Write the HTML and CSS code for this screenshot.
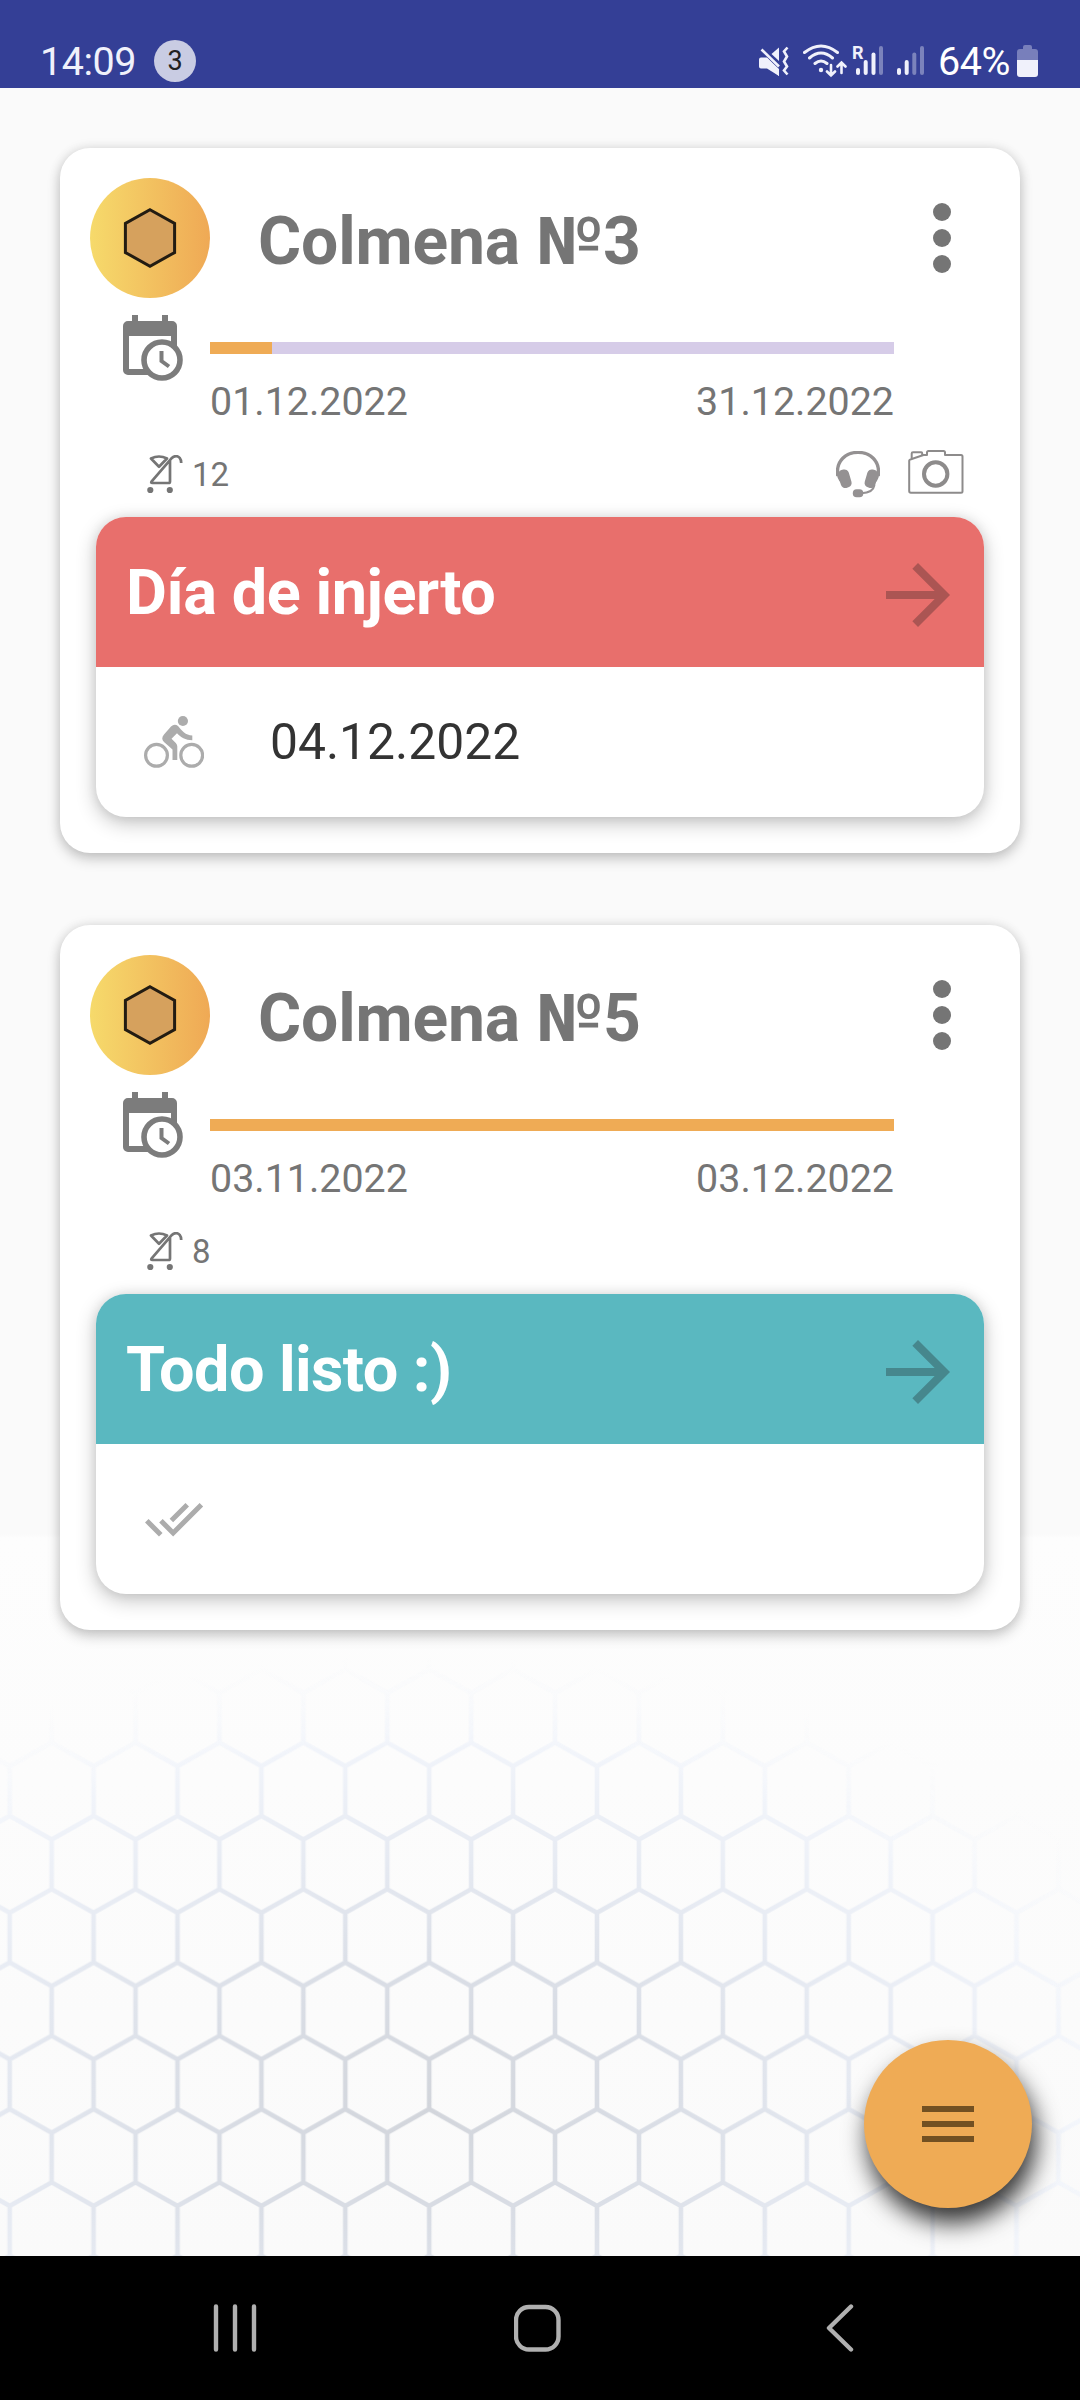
FILE: index.html
```html
<!DOCTYPE html>
<html lang="es">
<head>
<meta charset="utf-8">
<title>Colmenas</title>
<link rel="stylesheet" href="styles.css">
</head>
<body>
<svg class="defs" width="0" height="0" aria-hidden="true">
  <defs>
    <symbol id="calendar" viewBox="0 0 60 66">
      <path fill="#7c7c7c" fill-rule="evenodd" d="M9 0h6v6h24V0h6v6h4a5 5 0 0 1 5 5v44a5 5 0 0 1-5 5H5a5 5 0 0 1-5-5V11a5 5 0 0 1 5-5h4zM6 21v33h42V21z"/>
      <circle cx="39" cy="45" r="18" fill="#fff" stroke="#7c7c7c" stroke-width="5.6"/>
      <path d="M38.500 36v10l7.500 5.500" fill="none" stroke="#7c7c7c" stroke-width="4"/>
    </symbol>
    <symbol id="stroller" viewBox="0 0 36 39">
      <g fill="none" stroke="#757575" stroke-width="2.700" stroke-linejoin="round">
        <path d="M23 6v20.500q0 1.500-1.500 1.500H5.500q-2 0-.8-1.600L24.500 3.300q4.500-4 8.200-.4 1.400 1.700 1.500 5.100"/>
        <path d="M4 3.500q8-4 16 0L12 11.800z"/>
      </g>
      <circle cx="3.300" cy="35" r="3.100" fill="#757575"/><circle cx="22.800" cy="35" r="3.100" fill="#757575"/>
    </symbol>
    <symbol id="arrow" viewBox="0 0 24 24">
      <path d="M12 4l-1.410 1.410L16.170 11H4v2h12.170l-5.580 5.590L12 20l8-8z"/>
    </symbol>
    <symbol id="more" viewBox="0 0 18 70">
      <circle cx="9" cy="9" r="9"/><circle cx="9" cy="35" r="9"/><circle cx="9" cy="61" r="9"/>
    </symbol>
    <symbol id="hive" viewBox="0 0 120 120">
      <path d="M60 31.800 84.600 45.500v29L60 88.200 35.400 74.500v-29z" fill="#d6a15d" stroke="#231c12" stroke-width="3"/>
    </symbol>
  </defs>
</svg>

<header class="status">
  <span class="clock">14:09</span>
  <span class="badge">3</span>
  <div class="status-icons">
    <svg class="mute" viewBox="0 0 30 32" width="30" height="32" fill="#f0f1fb">
      <path d="M2 12.500h6L20 25v6L8 23.500H2q-2 0-2-2v-7q0-2 2-2z"/>
      <path d="M8 13 20 24v7L7 20z"/><path d="M12.500 9 20 2.500V16z"/>
      <path d="M2.500 4.500 20 21.500" stroke="#f0f1fb" stroke-width="2.600"/>
      <path d="M28.500 2.500l-3.500 4 3 5-3 5 3 5-3 4 3.500 4" fill="none" stroke="#f0f1fb" stroke-width="2.600"/>
    </svg>
    <svg class="wifi" viewBox="0 0 44 34" width="44" height="34" fill="none" stroke="#f0f1fb" stroke-width="3" stroke-linecap="round">
      <path d="M1.500 8.500Q18-4.500 34.500 8.500M6.500 14Q18 4 29.500 14M12 19.500q6-5 12 0"/>
      <circle cx="18" cy="26" r="2.200" fill="#f0f1fb" stroke="none"/>
      <path d="M28 21v10.500m-4-4 4 4 4-4M38.500 29V18.500m-4 4 4-4 4 4" stroke-width="2.600"/>
    </svg>
    <div class="signal-one">
      <span class="roaming">R</span>
      <svg viewBox="0 0 31 32" width="31" height="32" fill="#f0f1fb">
        <rect x="4" y="23" width="4" height="7" rx="2"/><rect x="11.700" y="15" width="4" height="15" rx="2"/><rect x="19.500" y="7.500" width="4" height="22.500" rx="2"/><rect x="27" y="1" width="4" height="29" rx="2" opacity=".38"/>
      </svg>
    </div>
    <svg class="signal-two" viewBox="0 0 27 32" width="27" height="32" fill="#f0f1fb">
      <rect x="0" y="23" width="4" height="7" rx="2"/><rect x="7.700" y="15" width="4" height="15" rx="2"/><rect x="15.300" y="7.500" width="4" height="22.500" rx="2" opacity=".38"/><rect x="23" y="1" width="4" height="29" rx="2" opacity=".38"/>
    </svg>
    <span class="percent">64%</span>
    <svg class="battery" viewBox="0 0 21 32" width="21" height="32" fill="#f0f1fb">
      <path d="M6 2q0-2 2-2h5q2 0 2 2v2h3q3 0 3 3v8H0V7q0-3 3-3h3z" opacity=".36"/>
      <path d="M0 15h21v14q0 3-3 3H3q-3 0-3-3z"/>
    </svg>
  </div>
</header>

<main class="content">
  <svg class="honeycomb" viewBox="0 0 1080 720" aria-hidden="true">
    <defs>
      <pattern id="cells" width="83.900" height="146.600" patternUnits="userSpaceOnUse" patternTransform="translate(9.700 230.200)">
        <path d="M0-.5V49.700L41.950 73.300 83.900 49.700V-.5M0 0 41.950-23.600 83.900 0M41.950 73.300V123M0 146.600 41.950 123 83.900 146.600" fill="none" stroke="#fff" stroke-width="4.600"/>
      </pattern>
      <mask id="grid" maskUnits="userSpaceOnUse" x="0" y="0" width="1080" height="720"><rect width="1080" height="720" fill="url(#cells)"/></mask>
      <radialGradient id="fade" gradientUnits="userSpaceOnUse" cx="0" cy="0" r="1" gradientTransform="translate(420 570) scale(800 450)">
        <stop offset="0" stop-color="#d2d5db"/><stop offset=".3" stop-color="#dadee6"/><stop offset=".55" stop-color="#e6eaf2"/><stop offset=".8" stop-color="#f1f4fa"/><stop offset="1" stop-color="#f8fafd" stop-opacity="0"/>
      </radialGradient>
    </defs>
    <rect width="1080" height="720" fill="url(#fade)" mask="url(#grid)"/>
  </svg>

  <article class="card">
    <div class="card-head">
      <span class="avatar"><svg width="120" height="120"><use href="#hive"/></svg></span>
      <h2>Colmena №3</h2>
      <svg class="more" width="18" height="70"><use href="#more"/></svg>
    </div>
    <div class="schedule">
      <svg class="calendar" width="60" height="66"><use href="#calendar"/></svg>
      <div class="timeline">
        <div class="track"><div class="fill" style="width:9.1%"></div></div>
        <div class="dates"><span>01.12.2022</span><span>31.12.2022</span></div>
      </div>
    </div>
    <div class="meta">
      <svg width="36" height="39"><use href="#stroller"/></svg>
      <span class="count">12</span>
      <svg class="headset" viewBox="0 0 44 47" width="44" height="47" fill="#949192">
        <path d="M1.800 25C-3 -6.500 47-6.500 42.200 25" fill="none" stroke="#949192" stroke-width="3.300"/>
        <rect x="-5.500" y="-9" width="11" height="18.500" rx="4.500" transform="translate(8.800 27.500) rotate(-16)"/>
        <rect x="-5.500" y="-9" width="11" height="18.500" rx="4.500" transform="translate(35.400 27.500) rotate(16)"/>
        <path d="M1.300 20q.5 8 5 12M42.700 20q-.5 8-4 11" fill="none" stroke="#949192" stroke-width="2"/>
        <path d="M38.500 34q-1.500 8-13 8.200" fill="none" stroke="#949192" stroke-width="2"/>
        <rect x="16.800" y="38.300" width="10.500" height="8" rx="3.800"/>
      </svg>
      <svg class="camera" viewBox="0 0 56 44" width="56" height="44" fill="none" stroke="#8d8b8b" stroke-width="2" stroke-linejoin="round">
        <path d="M1.200 10.500V41q0 1.700 1.700 1.700H53q1.500 0 1.500-1.500V6.500Q54.500 5 53 5H37V2.500Q37 1 35.500 1h-15Q19 1 19 2.500V5h-3.500L3 9.200q-1.800.5-1.800 1.300z"/>
        <path d="M3.700 8.500V3.500Q3.700 2.300 5 2.300h8.200q1 0 1 1.200v1.700"/>
        <circle cx="27.700" cy="24" r="11.700" stroke-width="4"/>
      </svg>
    </div>
    <section class="task">
      <div class="task-head task-red"><h3>Día de injerto</h3><svg class="arrow" width="96" height="96"><use href="#arrow"/></svg></div>
      <div class="task-body">
        <svg class="task-icon" viewBox="0 -4 60 60" width="60" height="60">
          <g fill="none" stroke="#acacac" stroke-width="3.200"><circle cx="12.500" cy="39.300" r="10.900"/><circle cx="47.700" cy="39.300" r="10.900"/></g>
          <circle cx="38.900" cy="5" r="5.100" fill="#acacac"/>
          <path fill="#acacac" d="M27 10.500q3.500-3 7-.5c4 5 7.500 9.200 14.300 9.500v4.700c-7 0-11.500-3-15.300-7l-5.500 5.500 4.300 4.200q1.500 1.500 1.500 3.500V44H28.500V33.500L20 26q-3.500-3.500 0-7.500z"/>
        </svg>
        <span>04.12.2022</span>
      </div>
    </section>
  </article>

  <article class="card">
    <div class="card-head">
      <span class="avatar"><svg width="120" height="120"><use href="#hive"/></svg></span>
      <h2>Colmena №5</h2>
      <svg class="more" width="18" height="70"><use href="#more"/></svg>
    </div>
    <div class="schedule">
      <svg class="calendar" width="60" height="66"><use href="#calendar"/></svg>
      <div class="timeline">
        <div class="track"><div class="fill" style="width:100%"></div></div>
        <div class="dates"><span>03.11.2022</span><span>03.12.2022</span></div>
      </div>
    </div>
    <div class="meta">
      <svg width="36" height="39"><use href="#stroller"/></svg>
      <span class="count">8</span>
    </div>
    <section class="task">
      <div class="task-head task-teal"><h3>Todo listo :)</h3><svg class="arrow" width="96" height="96"><use href="#arrow"/></svg></div>
      <div class="task-body">
        <svg class="task-icon" viewBox="0 0 24 24" width="60" height="60" fill="#acacac">
          <path d="M18 7l-1.410-1.410-6.340 6.340 1.410 1.410L18 7zm4.240-1.410L11.660 16.170 7.480 12l-1.410 1.410L11.660 19l12-12-1.420-1.410zM.41 13.410L6 19l1.410-1.410L1.830 12 .41 13.410z"/>
        </svg>
      </div>
    </section>
  </article>
</main>

<button class="fab" aria-label="Menú">
  <span></span><span></span><span></span>
</button>

<nav class="navbar">
  <svg viewBox="0 0 48 48" width="48" height="48"><path d="M5 2.500v43M24 2.500v43M43 2.500v43"/></svg>
  <svg viewBox="0 0 48 48" width="48" height="48"><rect x="2" y="3" width="42.500" height="42.500" rx="13"/></svg>
  <svg viewBox="0 0 48 48" width="48" height="48"><path d="M35 2.500 13 24l22 21.500"/></svg>
</nav>
</body>
</html>
```
FILE: styles.css
```css
* { box-sizing: border-box; }

body {
  margin: 0;
  width: 1080px;
  height: 2400px;
  display: flex;
  flex-direction: column;
  overflow: hidden;
  background: #fafafa;
  font-family: Roboto, "Liberation Sans", sans-serif;
  color: #757575;
}

svg { display: block; flex: none; }
.defs { position: absolute; }

.status {
  height: 88px;
  padding: 34px 42px 0 40px;
  display: flex;
  align-items: center;
  background: #343f96;
  color: #f0f1fb;
}
.clock { font-size: 39.5px; line-height: 46px; width: 114px; padding-top: 1px; letter-spacing: -.5px; }
.badge {
  width: 42px;
  height: 42px;
  border-radius: 50%;
  background: #c9cce3;
  color: #222;
  font-size: 27px;
  line-height: 43px;
  text-align: center;
}
.status-icons { margin-left: auto; display: flex; align-items: center; }
.wifi { margin-left: 14px; }
.signal-one { position: relative; margin-left: 5px; }
/* Roaming mark overlaps the first bars */
.roaming { position: absolute; left: 0; top: -3px; font-size: 18px; line-height: 22px; font-weight: 700; }
.signal-two { margin-left: 14px; }
.percent { width: 78px; margin-left: 14px; padding-top: 1px; font-size: 39.5px; line-height: 46px; letter-spacing: -.4px; color: #fff; }
.battery { margin-left: 1px; }

.content {
  position: relative;
  flex: 1;
  padding: 60px;
  display: flex;
  flex-direction: column;
  gap: 72px;
  background: linear-gradient(#fafafa 1446px, #fdfdfd 1450px, #fafafa 2168px);
}
.honeycomb { position: absolute; left: 0; bottom: 0; width: 1080px; height: 720px; filter: blur(.6px); }

.card {
  position: relative;
  height: 705px;
  padding: 30px 30px 36px;
  border-radius: 30px;
  background: #fff;
  box-shadow: 0 6px 14px rgba(0, 0, 0, .2), 0 0 12px rgba(0, 0, 0, .1);
}
.card-head { height: 120px; display: flex; align-items: center; }
.avatar { width: 120px; height: 120px; border-radius: 50%; background: linear-gradient(90deg, #f6da6b, #efa955); }
.card-head h2 { margin: 0 0 0 48px; padding-top: 7px; font-size: 66px; line-height: 77px; font-weight: 700; letter-spacing: -.15px; white-space: nowrap; }
.more { margin: 0 39px 0 auto; fill: #757575; }

.schedule { display: flex; height: 127px; }
.calendar { margin: 17px 27px 0 33px; }
.timeline { width: 684px; padding-top: 44px; }
.track { height: 12px; background: #d6cce8; }
.fill { height: 12px; background: #efab55; }
.dates { display: flex; justify-content: space-between; margin-top: 24.5px; font-size: 39.4px; line-height: 46px; }

.meta { height: 92px; padding: 6px 26px 0 57px; display: flex; align-items: center; }
.count { margin-left: 9px; padding-top: 2px; font-size: 33px; line-height: 40px; }
.headset { margin-left: auto; }
.camera { margin: -4px 0 0 28px; }

.task { margin: 0 6px; border-radius: 30px; background: #fff; overflow: hidden; box-shadow: 0 6px 20px rgba(0, 0, 0, .24), 0 0 12px rgba(0, 0, 0, .08); }
.task-head { height: 150px; padding: 0 18px 0 30px; display: flex; align-items: center; justify-content: space-between; }
.task-head h3 { margin: 0; padding-top: 2px; font-size: 63px; line-height: 74px; font-weight: 700; letter-spacing: -.45px; color: #fff; }
.task-red { background: #e86f6c; }
.task-red .arrow { fill: #ab5553; }
.task-teal { background: #5ab8c0; }
.task-teal h3 { letter-spacing: -.6px; }
.task-teal .arrow { fill: #46878d; }
.arrow { margin-top: 6px; }
.task-body { height: 150px; padding-left: 48px; display: flex; align-items: center; font-size: 49.8px; color: #333; }
.task-body span { margin-left: 66px; line-height: 58px; }

/* Floating action button sits above the page content */
.fab {
  position: absolute;
  left: 864px;
  top: 2040px;
  width: 168px;
  height: 168px;
  padding: 0;
  border: 0;
  border-radius: 50%;
  display: flex;
  flex-direction: column;
  align-items: center;
  justify-content: center;
  gap: 9px;
  background: #efab55;
  box-shadow: 4px 15px 24px rgba(0, 0, 0, .8);
}
.fab span { width: 52px; height: 6px; background: #725022; }

.navbar {
  position: relative;
  height: 144px;
  padding: 0 216px 0 211px;
  display: flex;
  align-items: center;
  justify-content: space-between;
  background: #000;
}
.navbar svg { fill: none; stroke: #b0b0b0; stroke-width: 4.4; stroke-linecap: round; stroke-linejoin: round; }
```
